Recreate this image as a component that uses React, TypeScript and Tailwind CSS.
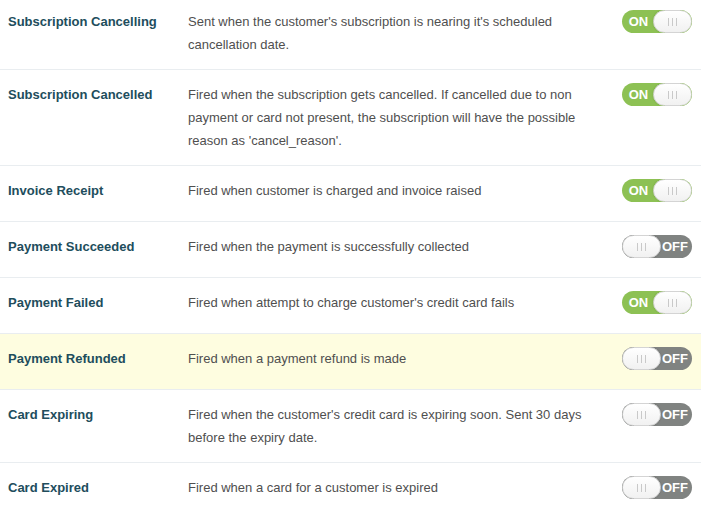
import { useState } from 'react';

interface EventRow {
  title: string;
  description: string;
  enabled: boolean;
  highlighted?: boolean;
}

const EVENTS: EventRow[] = [
  {
    title: 'Subscription Cancelling',
    description: "Sent when the customer's subscription is nearing it's scheduled cancellation date.",
    enabled: true,
  },
  {
    title: 'Subscription Cancelled',
    description:
      "Fired when the subscription gets cancelled. If cancelled due to non payment or card not present, the subscription will have the possible reason as 'cancel_reason'.",
    enabled: true,
  },
  { title: 'Invoice Receipt', description: 'Fired when customer is charged and invoice raised', enabled: true },
  { title: 'Payment Succeeded', description: 'Fired when the payment is successfully collected', enabled: false },
  { title: 'Payment Failed', description: "Fired when attempt to charge customer's credit card fails", enabled: true },
  { title: 'Payment Refunded', description: 'Fired when a payment refund is made', enabled: false, highlighted: true },
  {
    title: 'Card Expiring',
    description: "Fired when the customer's credit card is expiring soon. Sent 30 days before the expiry date.",
    enabled: false,
  },
  { title: 'Card Expired', description: 'Fired when a card for a customer is expired', enabled: false },
];

const Grip = () => (
  <div className="flex items-center gap-[3px]">
    <span className="block w-px h-[8px] bg-[#c9c9c9]" />
    <span className="block w-px h-[8px] bg-[#c9c9c9]" />
    <span className="block w-px h-[8px] bg-[#c9c9c9]" />
  </div>
);

const Knob = () => (
  <div className="h-full flex-1 rounded-full bg-gradient-to-b from-white to-[#f1f1f1] border border-[#d4d4d4] shadow-[0_0_2px_rgba(0,0,0,0.15)] flex items-center justify-center">
    <Grip />
  </div>
);

const Toggle: React.FC<{ on: boolean; onClick: () => void }> = ({ on, onClick }) => (
  <button
    onClick={onClick}
    className={`w-[70px] h-[23px] rounded-full flex items-stretch overflow-hidden text-white font-bold text-[13px] leading-none ${
      on ? 'bg-[#8dc154]' : 'bg-[#808381]'
    }`}
  >
    {on ? (
      <>
        <span className="w-[31px] shrink-0 flex items-center justify-center pl-[2px]">ON</span>
        <Knob />
      </>
    ) : (
      <>
        <Knob />
        <span className="w-[31px] shrink-0 flex items-center justify-center pr-[3px]">OFF</span>
      </>
    )}
  </button>
);

export default function App() {
  const [events, setEvents] = useState(EVENTS);

  const toggle = (i: number) =>
    setEvents((prev) => prev.map((e, idx) => (idx === i ? { ...e, enabled: !e.enabled } : e)));

  return (
    <div className="w-[701px] h-[512px] overflow-hidden bg-white font-['Liberation_Sans',Arial,sans-serif] text-[13px] leading-[23px]">
      {events.map((e, i) => (
        <div
          key={e.title}
          className={`flex items-start min-h-[56px] pb-[13px] border-b border-[#e9edf0] ${
            i === 0 ? 'pt-[10px]' : 'pt-[13px]'
          } ${e.highlighted ? 'bg-[#fefde0]' : ''}`}
        >
          <div className="w-[188px] shrink-0 pl-[8px] font-bold text-[#214d5c]">{e.title}</div>
          <div className="w-[410px] shrink-0 text-[#4f4f4f]">{e.description}</div>
          <div className="flex-1 flex justify-end pr-[9px]">
            <Toggle on={e.enabled} onClick={() => toggle(i)} />
          </div>
        </div>
      ))}
    </div>
  );
}
